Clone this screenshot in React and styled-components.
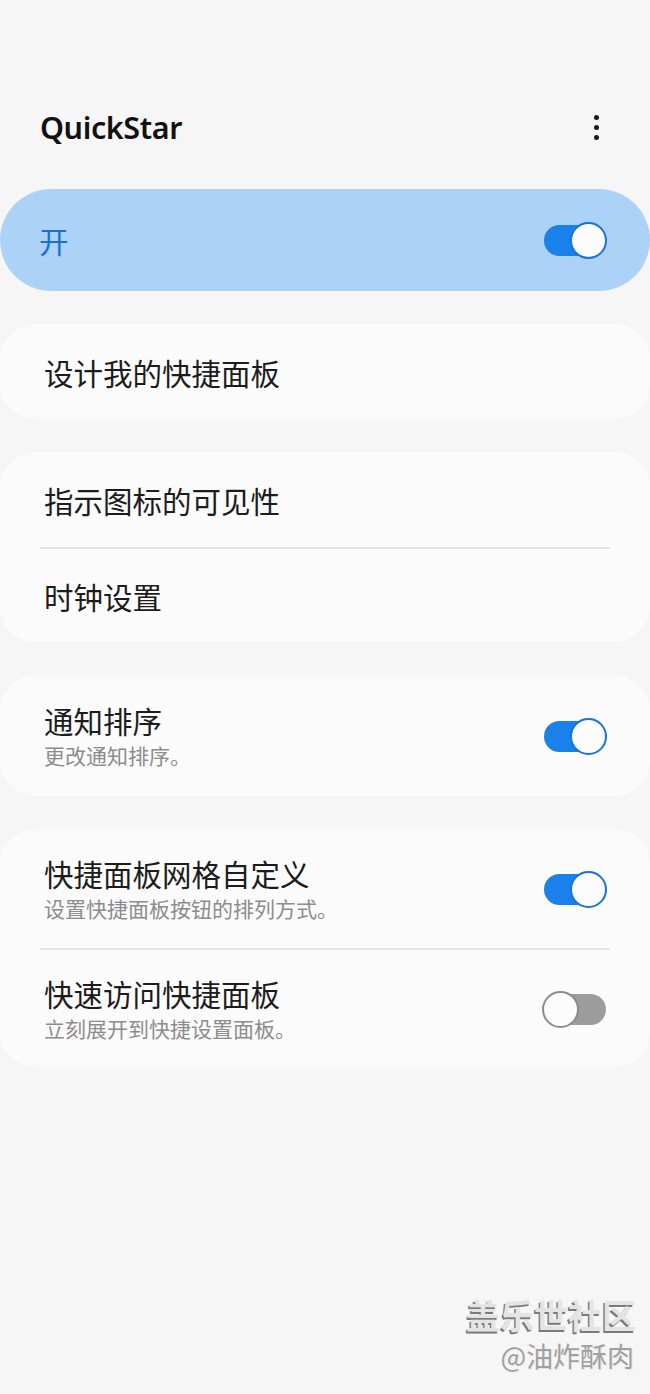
import React from "react";
import styled, { createGlobalStyle } from "styled-components";

const Global = createGlobalStyle`
  html, body { margin: 0; padding: 0; background: #f6f6f6; }
  body { font-family: "Noto Sans", "Noto Sans CJK SC", sans-serif; }
  * { box-sizing: border-box; }
`;

const Page = styled.div`
  position: relative;
  width: 650px;
  min-height: 1394px;
  background: #f6f6f6;
  display: flex;
  flex-direction: column;
  gap: 33px;
  padding-top: 104px;
  overflow: hidden;
`;

const Header = styled.div`
  display: flex;
  align-items: center;
  justify-content: space-between;
  height: 46px;
  padding: 0 41px 0 40px;
  margin-bottom: 6px;
`;

const Title = styled.h1`
  margin: 0;
  font-family: "Noto Sans", sans-serif;
  font-weight: 600;
  font-size: 30.5px;
  letter-spacing: -0.4px;
  color: #111;
`;

const Kebab = styled.div`
  display: flex;
  flex-direction: column;
  gap: 5px;
  align-items: center;
  padding-right: 10px;
  span {
    width: 5px;
    height: 5px;
    border-radius: 50%;
    background: #1a1a1a;
  }
`;

const MasterCard = styled.div`
  height: 102px;
  border-radius: 51px;
  background: #acd2f8;
  display: flex;
  align-items: center;
  justify-content: space-between;
  padding: 0 44px 0 39px;
  font-family: "Noto Sans CJK SC", sans-serif;
  font-size: 29.5px;
  color: #1b6fcf;
`;

const Card = styled.div`
  background: #fbfbfb;
  border-radius: 36px;
  display: flex;
  flex-direction: column;
  padding: 0 40px;
`;

const Row = styled.div`
  height: ${(p) => p.$h}px;
  display: flex;
  align-items: center;
  justify-content: space-between;
  padding: 0 4px 0 4px;
  border-top: ${(p) => (p.$divider ? "2px solid #e4e4e4" : "none")};
`;

const Texts = styled.div`
  display: flex;
  flex-direction: column;
`;

const RowTitle = styled.div`
  font-family: "Noto Sans CJK SC", sans-serif;
  font-size: 29.5px;
  line-height: 38px;
  color: #1c1c1c;
`;

const RowSub = styled.div`
  font-family: "Noto Sans CJK SC", sans-serif;
  font-size: 21px;
  line-height: 30px;
  margin-top: 1px;
  color: #8c8c8c;
`;

const SwitchWrap = styled.div`
  position: relative;
  width: 62px;
  height: 36px;
  flex-shrink: 0;
`;

const Track = styled.div`
  position: absolute;
  left: 0;
  right: 0;
  top: 3px;
  height: 31px;
  border-radius: 16px;
  background: ${(p) => (p.$on ? "#1a80ea" : "#9c9c9c")};
`;

const Thumb = styled.div`
  position: absolute;
  top: 0;
  ${(p) => (p.$on ? "right: -1px;" : "left: -2px;")}
  width: 37px;
  height: 37px;
  border-radius: 50%;
  background: #fcfcfc;
  border: 2px solid ${(p) => (p.$on ? "#1a72dc" : "#8c8c8c")};
`;

const Switch = ({ on }) => (
  <SwitchWrap>
    <Track $on={on} />
    <Thumb $on={on} />
  </SwitchWrap>
);

const Watermark = styled.div`
  position: absolute;
  right: 14px;
  bottom: 22px;
  display: flex;
  flex-direction: column;
  align-items: flex-end;
  gap: 6px;
  font-family: "Noto Sans CJK SC", sans-serif;
`;

const WmMain = styled.div`
  font-size: 34px;
  font-weight: 700;
  line-height: 38px;
  color: #e4e4e4;
  text-shadow: -1.5px 1.5px 0 #7a7a7a;
`;

const WmSub = styled.div`
  font-size: 27px;
  line-height: 32px;
  color: #a0a0a0;
  text-shadow: 1px 1px 0 #e8e8e8;
  margin-right: 2px;
`;

export default function App() {
  return (
    <>
      <Global />
      <Page>
        <Header>
          <Title>QuickStar</Title>
          <Kebab>
            <span />
            <span />
            <span />
          </Kebab>
        </Header>

        <MasterCard>
          <span>开</span>
          <Switch on />
        </MasterCard>

        <Card>
          <Row $h={95}>
            <RowTitle>设计我的快捷面板</RowTitle>
          </Row>
        </Card>

        <Card>
          <Row $h={95}>
            <RowTitle>指示图标的可见性</RowTitle>
          </Row>
          <Row $h={95} $divider>
            <RowTitle>时钟设置</RowTitle>
          </Row>
        </Card>

        <Card>
          <Row $h={121}>
            <Texts>
              <RowTitle>通知排序</RowTitle>
              <RowSub>更改通知排序。</RowSub>
            </Texts>
            <Switch on />
          </Row>
        </Card>

        <Card>
          <Row $h={119}>
            <Texts>
              <RowTitle>快捷面板网格自定义</RowTitle>
              <RowSub>设置快捷面板按钮的排列方式。</RowSub>
            </Texts>
            <Switch on />
          </Row>
          <Row $h={119} $divider>
            <Texts>
              <RowTitle>快速访问快捷面板</RowTitle>
              <RowSub>立刻展开到快捷设置面板。</RowSub>
            </Texts>
            <Switch on={false} />
          </Row>
        </Card>

        <Watermark>
          <WmMain>盖乐世社区</WmMain>
          <WmSub>@油炸酥肉</WmSub>
        </Watermark>
      </Page>
    </>
  );
}
